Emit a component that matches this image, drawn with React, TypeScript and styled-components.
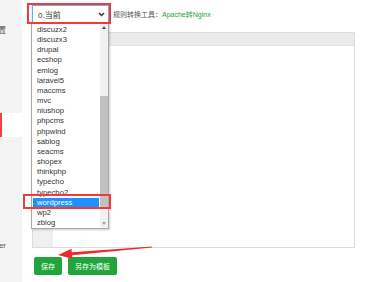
import React from "react";
import styled, { createGlobalStyle } from "styled-components";

const Global = createGlobalStyle`
  html, body { margin: 0; padding: 0; background: #fff; }
  body { font-family: "Liberation Sans", "Noto Sans CJK SC", sans-serif; }
  #root { width: 380px; height: 282px; overflow: hidden; }
`;

const Page = styled.div`
  position: relative;
  display: flex;
  width: 380px;
  height: 282px;
  overflow: hidden;
  background: #fff;
`;

const Sidebar = styled.nav`
  width: 22px;
  flex: none;
  background: #f3f3f3;
  padding-top: 17px;
  display: flex;
  flex-direction: column;
  overflow: hidden;
`;

const MenuItem = styled.div<{ $active?: boolean }>`
  height: 24px;
  flex: none;
  display: flex;
  align-items: center;
  justify-content: flex-end;
  padding-right: 16px;
  white-space: nowrap;
  font-size: 8px;
  color: #555;
  background: ${(p) => (p.$active ? "#fff" : "transparent")};
  box-shadow: ${(p) => (p.$active ? "inset 2px 0 0 #f0413c" : "none")};
`;

const Main = styled.main`
  flex: 1;
  display: flex;
  flex-direction: column;
  padding: 5px 0 0 10px;
`;

const Toolbar = styled.div`
  display: flex;
  align-items: center;
  height: 18px;
`;

const SelectWrap = styled.div`
  position: relative;
  width: 77px;
  height: 18px;
`;

const SelectBox = styled.div`
  box-sizing: border-box;
  width: 100%;
  height: 100%;
  border: 1px solid #66afe9;
  box-shadow: 0 0 2px rgba(102, 175, 233, 0.6);
  background: #fff;
  display: flex;
  align-items: center;
  justify-content: space-between;
  padding: 0 3px 0 5px;
  font-size: 8px;
  color: #333;
`;

const Label = styled.span`
  margin-left: 4px;
  font-size: 7px;
  color: #555;
  white-space: nowrap;
`;

const Link = styled.span`
  color: #20a53a;
`;

const Dropdown = styled.div`
  position: absolute;
  top: 17px;
  left: -1px;
  width: 78px;
  height: 207px;
  box-sizing: border-box;
  border: 1px solid #a9a9a9;
  background: #fff;
  box-shadow: 1px 1px 2px rgba(0, 0, 0, 0.2);
  display: flex;
  z-index: 5;
`;

const List = styled.ul`
  list-style: none;
  margin: 0;
  padding: 2px 0 0;
  flex: 1;
  min-width: 0;
`;

const Option = styled.li<{ $selected?: boolean }>`
  height: 10.16px;
  line-height: 10.16px;
  margin: 0 1px;
  padding-left: 4px;
  font-size: 7.7px;
  white-space: nowrap;
  color: ${(p) => (p.$selected ? "#fff" : "#333")};
  background: ${(p) => (p.$selected ? "#1e90ff" : "transparent")};
`;

const ScrollBar = styled.div`
  width: 8px;
  flex: none;
  background: #f1f1f1;
  display: flex;
  flex-direction: column;
  align-items: center;
  justify-content: space-between;
  padding: 3px 0;
  box-sizing: border-box;
`;

const Arrow = styled.div<{ $up?: boolean }>`
  width: 0;
  height: 0;
  border-left: 2.5px solid transparent;
  border-right: 2.5px solid transparent;
  ${(p) =>
    p.$up
      ? "border-bottom: 3px solid #505050;"
      : "border-top: 3px solid #a3a3a3;"}
`;

const ThumbTrack = styled.div`
  flex: 1;
  width: 100%;
  display: flex;
  flex-direction: column;
  padding: 67px 0 13px;
  box-sizing: border-box;
`;

const Thumb = styled.div`
  flex: 1;
  background: #c1c1c1;
`;

const Editor = styled.div`
  margin-top: 9px;
  width: 323px;
  height: 216px;
  box-sizing: border-box;
  border: 1px solid #dcdcdc;
  display: flex;
  flex-direction: column;
`;

const EditorHead = styled.div`
  height: 12px;
  flex: none;
  background: #ebebeb;
  border-bottom: 1px solid #e2e2e2;
`;

const EditorBody = styled.div`
  flex: 1;
  display: flex;
`;

const Gutter = styled.div`
  width: 20px;
  background: #f0f0f0;
`;

const Buttons = styled.div`
  display: flex;
  gap: 6px;
  margin-top: 9px;
  padding-left: 2px;
`;

const Btn = styled.button`
  height: 18px;
  padding: 0 7px;
  border: none;
  border-radius: 2px;
  background: #20a53a;
  color: #fff;
  font-family: "Noto Sans CJK SC", sans-serif;
  font-size: 7px;
  line-height: 18px;
`;

const Highlight = styled.div<{ $l: number; $t: number; $w: number; $h: number }>`
  position: absolute;
  left: ${(p) => p.$l}px;
  top: ${(p) => p.$t}px;
  width: ${(p) => p.$w}px;
  height: ${(p) => p.$h}px;
  box-sizing: border-box;
  border: 2px solid #ef3b3b;
  pointer-events: none;
  z-index: 10;
`;

const Overlay = styled.svg`
  position: absolute;
  left: 0;
  top: 0;
  z-index: 10;
  pointer-events: none;
`;

const options = [
  "discuzx2",
  "discuzx3",
  "drupal",
  "ecshop",
  "emlog",
  "laravel5",
  "maccms",
  "mvc",
  "niushop",
  "phpcms",
  "phpwind",
  "sablog",
  "seacms",
  "shopex",
  "thinkphp",
  "typecho",
  "typecho2",
  "wordpress",
  "wp2",
  "zblog",
];

const menu: { label: string; active?: boolean }[] = [
  { label: "设置" },
  { label: "" },
  { label: "" },
  { label: "" },
  { label: "", active: true },
  { label: "" },
  { label: "" },
  { label: "" },
  { label: "" },
  { label: "Docker" },
];

export default function App() {
  return (
    <>
      <Global />
      <Page>
        <Sidebar>
          {menu.map((m, i) => (
            <MenuItem key={i} $active={m.active}>
              {m.label}
            </MenuItem>
          ))}
        </Sidebar>
        <Main>
          <Toolbar>
            <SelectWrap>
              <SelectBox>
                <span>0.当前</span>
                <svg width="7" height="5" viewBox="0 0 7 5">
                  <path d="M1 1 L3.5 3.5 L6 1" fill="none" stroke="#333" strokeWidth="1.5" />
                </svg>
              </SelectBox>
              <Dropdown>
                <List>
                  {options.map((o) => (
                    <Option key={o} $selected={o === "wordpress"}>
                      {o}
                    </Option>
                  ))}
                </List>
                <ScrollBar>
                  <Arrow $up />
                  <ThumbTrack>
                    <Thumb />
                  </ThumbTrack>
                  <Arrow />
                </ScrollBar>
              </Dropdown>
            </SelectWrap>
            <Label>
              规则转换工具：<Link>Apache转Nginx</Link>
            </Label>
          </Toolbar>
          <Editor>
            <EditorHead />
            <EditorBody>
              <Gutter />
            </EditorBody>
          </Editor>
          <Buttons>
            <Btn>保存</Btn>
            <Btn>另存为模板</Btn>
          </Buttons>
        </Main>
        <Highlight $l={27} $t={3} $w={84} $h={21} />
        <Highlight $l={23} $t={194} $w={88} $h={15} />
        <Overlay width="380" height="282" viewBox="0 0 380 282">
          <polygon
            points="58,255 71.5,248.8 71.8,252.3 152,246.6 152,247.5 72.1,255.3 72.4,258.8"
            fill="#ee2b2b"
          />
        </Overlay>
      </Page>
    </>
  );
}
